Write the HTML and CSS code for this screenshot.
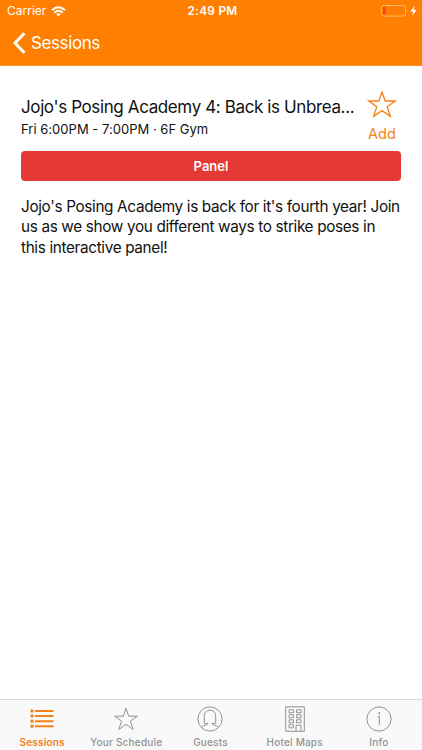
FILE: index.html
```html
<!DOCTYPE html>
<html lang="en">
<head>
  <meta charset="UTF-8" />
  <title>Sessions</title>
  <link rel="stylesheet" href="styles.css">
</head>
<body>
  <!-- Status bar + navigation -->
  <header>
    <div class="status-bar">
      <div class="carrier">
        <span>Carrier</span>
        <svg width="15" height="11" viewBox="0 0 15 11" fill="none" stroke="#fff" stroke-width="1.9">
          <path d="M1 4.1Q7.5 -1.7 14 4.1" />
          <path d="M3.3 6.7Q7.5 3 11.7 6.7" />
          <path d="M7.5 10.4L5.3 8.2Q7.5 6.5 9.7 8.2Z" fill="#fff" stroke="none" />
        </svg>
      </div>
      <span class="time">2:49 PM</span>
      <div class="battery">
        <svg width="37" height="12" viewBox="0 0 37 12">
          <rect x=".5" y=".5" width="24" height="10.6" rx="2.5" fill="none" stroke="#ffb56b" />
          <rect x="2" y="2" width="2.6" height="7.6" rx=".8" fill="#fb3f1c" />
          <path d="M26 4.1Q27.4 5.8 26 7.5Z" fill="#ffb56b" />
          <path d="M33.8 .8L29.3 6.6H32.1L31.2 10.8L35.7 4.9H32.8Z" fill="#fff" />
        </svg>
      </div>
    </div>
    <a class="back" href="#">
      <svg width="13" height="22" viewBox="0 0 13 22" fill="none" stroke="#fff" stroke-width="3">
        <path d="M11.4 1.2L2 11L11.4 20.8" />
      </svg>
      <span>Sessions</span>
    </a>
  </header>

  <!-- Session details -->
  <main>
    <div class="session">
      <div class="session-text">
        <h1>Jojo's Posing Academy 4: Back is Unbrea...</h1>
        <p class="when">Fri 6:00PM - 7:00PM · 6F Gym</p>
      </div>
      <a class="add" href="#">
        <svg width="30" height="28" viewBox="0 0 30 28" fill="none" stroke="#f58216" stroke-width="1.3">
          <path d="M15 2L18.2 11H28.2L20.2 16.8L23.3 26.4L15 20.6L6.7 26.4L9.8 16.8L1.8 11H11.8Z" />
        </svg>
        <span>Add</span>
      </a>
    </div>
    <div class="tag">Panel</div>
    <p class="description">Jojo's Posing Academy is back for it's fourth year! Join us as we show you different ways to strike poses in this interactive panel!</p>
  </main>

  <!-- Tab bar -->
  <nav>
    <a class="active" href="#">
      <svg width="28" height="28" viewBox="0 0 28 28">
        <path d="M2.5 4.5h3v3h-3zM2.5 9.6h3v3h-3zM2.5 14.7h3v3h-3zM2.5 19.8h3v3h-3z" />
        <path d="M7 5h18.5v2H7zM7 10.1h18.5v2H7zM7 15.2h18.5v2H7zM7 20.3h18.5v2H7z" />
      </svg>
      <span>Sessions</span>
    </a>
    <a href="#">
      <svg width="28" height="28" viewBox="0 0 28 28">
        <path d="M14 3.2L16.7 11.2H25.4L18.4 16.1L21.1 24.5L14 19.3L6.9 24.5L9.6 16.1L2.6 11.2H11.3Z" />
      </svg>
      <span>Your Schedule</span>
    </a>
    <a href="#">
      <svg width="28" height="28" viewBox="0 0 28 28">
        <circle cx="14" cy="14" r="12.1" />
        <path d="M5.7 22.4Q6.6 20.8 9.4 20.2Q12 19.6 12 18.4H8.3V11.2Q8.3 5.2 14 5.2Q19.7 5.2 19.7 11.2V18.4H16Q16 19.6 18.6 20.2Q21.4 20.8 22.3 22.4" />
      </svg>
      <span>Guests</span>
    </a>
    <a href="#">
      <svg width="28" height="28" viewBox="0 0 28 28">
        <path d="M4.7 1.8H23.3V26.3H4.7Z" />
        <path d="M8 4.8h4.5v3H8zM15.5 4.8H20v3h-4.5zM8 9.8h4.5v3H8zM15.5 9.8H20v3h-4.5zM8 14.8h4.5v3H8zM15.5 14.8H20v3h-4.5zM8 19.8h4.5v3H8zM15 26.3V20.3h5v6" />
      </svg>
      <span>Hotel Maps</span>
    </a>
    <a href="#">
      <svg width="28" height="28" viewBox="0 0 28 28">
        <circle cx="14" cy="14" r="12.1" />
        <path d="M12.6 11.3H14.3V19.8" />
        <circle class="dot" cx="14.2" cy="8.3" r="1" />
      </svg>
      <span>Info</span>
    </a>
  </nav>
</body>
</html>
```
FILE: styles.css
```css
/* ---- Global styles ---- */
* {
  box-sizing: border-box;
}
html, body {
  margin: 0;
  height: 100%;
}
body {
  display: flex;
  flex-direction: column;
  overflow: hidden;
  background: #fff;
  color: #111;
  font-family: Inter, "Liberation Sans", sans-serif;
}
a {
  color: inherit;
  text-decoration: none;
}
svg {
  display: block;
}
span, h1, p {
  white-space: nowrap;
}

/* ---- Header ---- */
header {
  height: 66px;
  background: #ff8000;
  border-bottom: 1px solid #f4923a;
  color: #fff;
}
.status-bar {
  display: grid;
  grid-template-columns: 1fr auto 1fr;
  align-items: center;
  height: 22px;
  padding: 0 4px 0 7px;
  font-size: 12px;
  line-height: 22px;
}
.carrier {
  display: flex;
  align-items: center;
  gap: 5px;
}
.time {
  font-weight: 600;
  font-size: 11.8px;
  letter-spacing: 0.3px;
}
.battery {
  justify-self: end;
}
.back {
  display: flex;
  align-items: center;
  gap: 5px;
  width: max-content;
  height: 42px;
  padding-left: 13px;
  font-size: 17px;
  letter-spacing: -0.4px;
}

/* ---- Session ---- */
main {
  flex: 1;
  padding: 24px 21px 0;
}
.session {
  display: flex;
  justify-content: space-between;
  height: 61px;
}
.session-text {
  padding-top: 6px;
}
h1 {
  margin: 0;
  font-size: 17px;
  font-weight: 400;
  letter-spacing: -0.38px;
  line-height: 22px;
}
.when {
  margin: 0;
  font-size: 13px;
  line-height: 22px;
  letter-spacing: 0.02px;
}
.add {
  display: flex;
  flex-direction: column;
  align-items: center;
  width: 38px;
  color: #f58216;
  font-size: 14.5px;
  line-height: 31px;
}
.tag {
  height: 30px;
  border-radius: 4px;
  background: #e53935;
  color: #fff;
  font-size: 13px;
  font-weight: 600;
  line-height: 30px;
  text-align: center;
}
.description {
  margin: 16px 0 0;
  font-size: 15.3px;
  letter-spacing: -0.34px;
  line-height: 20.4px;
  white-space: normal;
}

/* ---- Tab bar ---- */
nav {
  display: grid;
  grid-template-columns: repeat(5, 1fr);
  height: 51px;
  padding-right: 1px;
  border-top: 1px solid #d8d8d8;
  background: #f9f9f9;
  color: #929292;
  font-size: 10px;
  font-weight: 500;
  letter-spacing: 0.2px;
}
nav a {
  display: flex;
  flex-direction: column;
  align-items: center;
  padding-top: 5px;
  line-height: 19px;
}
nav svg {
  fill: none;
  stroke: #929292;
}
nav .dot {
  fill: #929292;
  stroke: none;
}
nav .active {
  color: #f58216;
  font-weight: 600;
}
nav .active svg {
  fill: #f58216;
  stroke: none;
}
```
